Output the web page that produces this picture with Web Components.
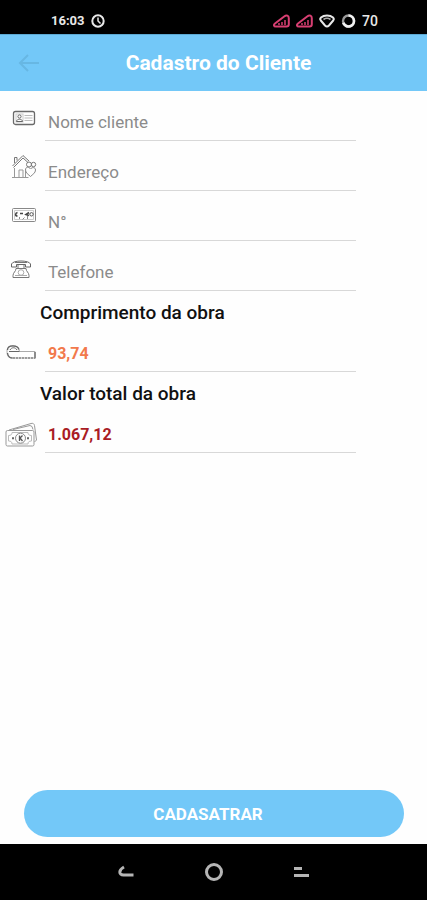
<!DOCTYPE html>
<html lang="pt-BR">
<head>
<meta charset="utf-8">
<meta name="viewport" content="width=device-width, initial-scale=1">
<title>Cadastro do Cliente</title>
<style>
html, body { margin: 0; min-height: 100%; }
body { background: #fff; font-family: Roboto, "Liberation Sans", sans-serif; }
</style>
</head>
<body>
<client-screen></client-screen>

<template id="t-screen">
<style>
:host { display: flex; flex-direction: column; min-height: 100vh; background: #fefefe; }
main { flex: 1; display: flex; flex-direction: column; }
form { flex: 1; display: flex; flex-direction: column; }
svg { display: block; fill: none; stroke: #777; stroke-width: 1; }
.fields { flex: 1; }
.action { padding: 0 23px 7px 24px; }
</style>
<status-bar time="16:03" battery="70"></status-bar>
<app-header>Cadastro do Cliente</app-header>
<main>
<form>
  <div class="fields">
    <form-field hint="Nome cliente">
      <svg slot="icon" width="24" height="48" viewBox="0 -2 24 48"><rect x="1.500" y="17.500" width="21" height="13" rx="2" stroke="#6a6a6a" stroke-width="1.300"/><rect x="4" y="20" width="7" height="8" stroke="#ccc"/><circle cx="7.500" cy="22.500" r="1.600" stroke="#666"/><path d="M4.500 27.500c0-3 6-3 6 0z" stroke="#666"/><path d="M12.500 21.500h8M12.500 24h8M12.500 26.500h8" stroke="#bbb"/></svg>
    </form-field>
    <form-field hint="Endereço">
      <svg slot="icon" width="26" height="48" viewBox="0 0 26 48"><path d="M1.500 24 12 13.500l6 5.500M2.500 25.500 12 16l5 4.500M3.500 21v-5.500H6v3" stroke="#777"/><path d="M3.500 26v9.500h14M1 35.500h3M8 35.500V28h4v7.500M14.500 29v6" stroke="#999"/><circle cx="18" cy="22.500" r="2.500"/><circle cx="22.500" cy="22.500" r="2.200"/><path d="M14.500 28c0-4 4-3 5-1 1.500-2 5-2 5 1 0 3-3 4.500-5 6.500-2-2-5-3.500-5-6.500z" stroke="#888"/></svg>
    </form-field>
    <form-field hint="N°">
      <svg slot="icon" width="26" height="48" viewBox="0 1 26 48"><rect x="1.500" y="17.500" width="23" height="13" rx="1" stroke="#888"/><path d="M3.500 19.500h19v9h-19z" stroke="#ccc"/><path d="M6.500 21.500C4 22 4 25 6.500 25M9 22.500h3M18 21.500l-3 2 3 1" stroke="#444" stroke-width="1.600"/><circle cx="20.500" cy="23.300" r="1.700" stroke="#555"/><path d="M8.500 26v2M11.500 28.500l2-2M16.500 28v-3" stroke="#888"/></svg>
    </form-field>
    <form-field hint="Telefone" kind="tel">
      <svg slot="icon" width="28" height="48" viewBox="0 -2 28 48"><path d="M1.500 23v-3C3 16 19 16 20.500 20v3h-5v-2.500h-9V23z" stroke="#666"/><path d="M5 18.500h12M8 21v3M14 21v3"/><path d="M6 24.500h10c0 3 3 4 3 7v2H3v-2c0-3 3-4 3-7z"/><circle cx="11" cy="28.500" r="2.800" stroke="#aaa"/><path d="M5 31.500h12" stroke="#aaa"/></svg>
    </form-field>
    <form-field heading="Comprimento da obra" value="93,74" style="--ink:#f2794c">
      <svg slot="icon" width="32" height="48" viewBox="0 -5 32 48"><path d="M2 22c0-3.500 2.500-5 6-5 4 0 6 2 6.500 5.500H30V29H7c-3.500 0-5-2-5-7z" stroke="#aaa"/><path d="M2.500 21c0-5.500 10-5.500 11.500-.5M2.500 24c.5 4 2.500 5 5 5M30 23v6.500" stroke="#666" stroke-width="1.300"/><path d="M5 21c1.500-3 5.500-3 7 0M4 22.500h10.500" stroke="#666"/><path d="M8 29h22" stroke="#888" stroke-width="1.300" stroke-dasharray="2 1"/></svg>
    </form-field>
    <form-field heading="Valor total da obra" value="1.067,12" style="--ink:#a91c24">
      <svg slot="icon" width="34" height="48" viewBox="-1 -6 34 48"><rect x="1" y="19.500" width="28" height="15.500" rx="1.500" stroke="#999"/><path d="M4 19 26 12.500c2-.5 3 0 3.500 2L31.500 29l-2 2M8 18.500l17-4 2 1 1 3" stroke="#999"/><path d="M7 21.500h16c0 2 1 3 3.500 3v5.500c-2.500 0-3.500 1-3.500 3H7c0-2-1-3-3.500-3v-5.500C6 24.500 7 23.500 7 21.500z" stroke="#bbb"/><circle cx="15.500" cy="27.200" r="5" stroke="#888"/><path d="M14.500 24.500v5.500M17.500 24.500 15 27l2.500 3" stroke="#555" stroke-width="1.300"/><path d="M7 27.200h2M22 27.200h2" stroke="#666" stroke-width="2"/></svg>
    </form-field>
  </div>
  <div class="action"><pill-button>CADASATRAR</pill-button></div>
</form>
</main>
<nav-bar></nav-bar>
</template>

<template id="t-status">
<style>
:host { display: flex; align-items: center; justify-content: space-between; height: 34px; padding: 8px 49px 0 51px; box-sizing: border-box; background: #000; color: #e8e8e8; font-size: 14px; font-weight: 500; line-height: 18px; }
div { display: flex; align-items: center; gap: 6px; }
.time { font-size: 13px; font-weight: 700; }
svg { display: block; fill: none; }
</style>
<div><span class="time"></span><svg width="14" height="14" viewBox="0 0 14 14" stroke="#e8e8e8" stroke-width="2"><circle cx="7" cy="7" r="5.700"/><path d="M7 3.500V7l2.500 2.500" stroke-width="1.500"/></svg></div>
<div>
<svg width="17" height="14" viewBox="0 0 17 14" stroke="#d83f72" stroke-width="2"><path d="M2 9.500 11.500 2.200c2-1.500 4.300-.5 4.300 2v6c0 1.500-.8 2.300-2.300 2.300H3C.5 12.500.5 10.700 2 9.500z"/><path d="M6 11V9M9 11V8M12 11V6" stroke-width="1.500"/></svg>
<svg width="17" height="14" viewBox="0 0 17 14" stroke="#d83f72" stroke-width="2"><path d="M2 9.500 11.500 2.200c2-1.500 4.300-.5 4.300 2v6c0 1.500-.8 2.300-2.300 2.300H3C.5 12.500.5 10.700 2 9.500z"/><path d="M6 11V9M9 11V8M12 11V6" stroke-width="1.500"/></svg>
<svg width="16" height="14" viewBox="0 0 16 14" stroke="#e8e8e8" stroke-width="2"><path d="M2 3.500c3-2.700 9-2.700 12 0 1 1 1 2 .2 3L10 11.500c-1.500 1.500-2.500 1.500-4 0L1.800 6.500C1 5.500 1 4.500 2 3.500z"/><path d="M4.500 5.500c2-1.300 5-1.300 7 0" stroke="#aaa" stroke-width="1.500"/></svg>
<svg width="15" height="14" viewBox="0 0 15 14"><circle cx="7.500" cy="7" r="5.500" stroke="#999" stroke-width="2.400"/><path d="M7.500 1.500a5.500 5.500 0 1 1-5.200 7.300" stroke="#f2f2f2" stroke-width="2.600"/></svg>
<span class="battery"></span>
</div>
</template>

<template id="t-header">
<style>
:host { display: grid; grid-template-columns: 58px 1fr 58px; align-items: center; height: 57px; box-sizing: border-box; border-top: 1px solid #5ca9d3; background: #73c8f8; }
button { display: flex; justify-content: center; padding: 0; border: 0; background: none; }
svg { display: block; }
h1 { margin: 0; grid-column: 2; justify-self: center; white-space: nowrap; color: #fff; font-size: 21px; line-height: 28px; font-weight: 700; padding-left: 10px; }
</style>
<button type="button" aria-label="Voltar"><svg width="22" height="20" viewBox="0 0 22 20" fill="none" stroke="#67b7e3" stroke-width="2"><path d="M21 10H3M10 2 2 10l8 8"/></svg></button>
<h1><slot></slot></h1>
</template>

<template id="t-field">
<style>
:host { display: block; }
.head { display: block; padding: 11px 16px 0 40px; color: #111; font-size: 19px; font-weight: 500; line-height: 22px; }
.head[hidden] { display: none; }
.row { display: grid; grid-template-columns: 45px 1fr; margin-right: 71px; height: 50px; }
:host([heading]) .row { height: 48px; }
.icon { display: flex; justify-content: center; align-items: center; }
:host([hint]) .icon { padding-left: 3px; }
:host([heading]) .icon { padding-right: 3px; }
input { min-width: 0; width: 100%; box-sizing: border-box; margin: 0; border: 0; border-bottom: 1px solid #d8d8d8; border-radius: 0; outline: 0; padding: 12px 3px 0; background: none; color: var(--ink, #333); font: 400 17px/20px Roboto, "Liberation Sans", sans-serif; }
:host([heading]) input { font-size: 16px; font-weight: 700; }
input::placeholder { color: #8b8b8b; opacity: 1; }
</style>
<label class="head" for="f" hidden></label>
<div class="row"><label class="icon" for="f"><slot name="icon"></slot></label><input id="f"></div>
</template>

<template id="t-button">
<style>
:host { display: block; }
button { display: block; width: 100%; height: 47px; padding: 0 12px 0 0; border: 0; border-radius: 24px; background: #73c8f8; color: #fff; font: 700 17px/20px Roboto, "Liberation Sans", sans-serif; }
</style>
<button type="button"><slot></slot></button>
</template>

<template id="t-nav">
<style>
:host { display: block; background: #000; }
nav { display: flex; justify-content: center; align-items: center; gap: 65px; height: 56px; }
button { display: block; padding: 0; border: 0; background: none; }
svg { display: block; fill: none; stroke: #b5b5b5; stroke-width: 3; }
</style>
<nav>
<button type="button" aria-label="Voltar"><svg width="24" height="20" viewBox="0 0 24 20"><path d="M9 5C3.500 8 3.500 13 8.500 13H18.500"/></svg></button>
<button type="button" aria-label="Início"><svg width="20" height="20" viewBox="0 0 20 20"><circle cx="10" cy="10" r="7.500"/></svg></button>
<button type="button" aria-label="Recentes"><svg width="24" height="20" viewBox="0 0 24 20"><path d="M5 6.500h8M5 13.500h15"/></svg></button>
</nav>
</template>

<script>
class BaseElement extends HTMLElement {
  constructor() {
    super();
    this.attachShadow({ mode: "open" }).append(
      document.getElementById(this.constructor.template).content.cloneNode(true)
    );
  }
}
class StatusBar extends BaseElement {
  static template = "t-status";
  connectedCallback() {
    this.shadowRoot.querySelector(".time").textContent = this.getAttribute("time");
    this.shadowRoot.querySelector(".battery").textContent = this.getAttribute("battery");
  }
}
class FormField extends BaseElement {
  static template = "t-field";
  connectedCallback() {
    const input = this.shadowRoot.querySelector("input");
    const head = this.shadowRoot.querySelector(".head");
    input.type = this.getAttribute("kind") || "text";
    if (this.hasAttribute("hint")) {
      input.placeholder = this.getAttribute("hint");
      input.setAttribute("aria-label", this.getAttribute("hint"));
    }
    if (this.hasAttribute("heading")) {
      head.textContent = this.getAttribute("heading");
      head.hidden = false;
    }
    input.value = this.getAttribute("value") || "";
  }
}
customElements.define("status-bar", StatusBar);
customElements.define("app-header", class extends BaseElement { static template = "t-header"; });
customElements.define("form-field", FormField);
customElements.define("pill-button", class extends BaseElement { static template = "t-button"; });
customElements.define("nav-bar", class extends BaseElement { static template = "t-nav"; });
customElements.define("client-screen", class extends BaseElement { static template = "t-screen"; });
</script>
</body>
</html>
